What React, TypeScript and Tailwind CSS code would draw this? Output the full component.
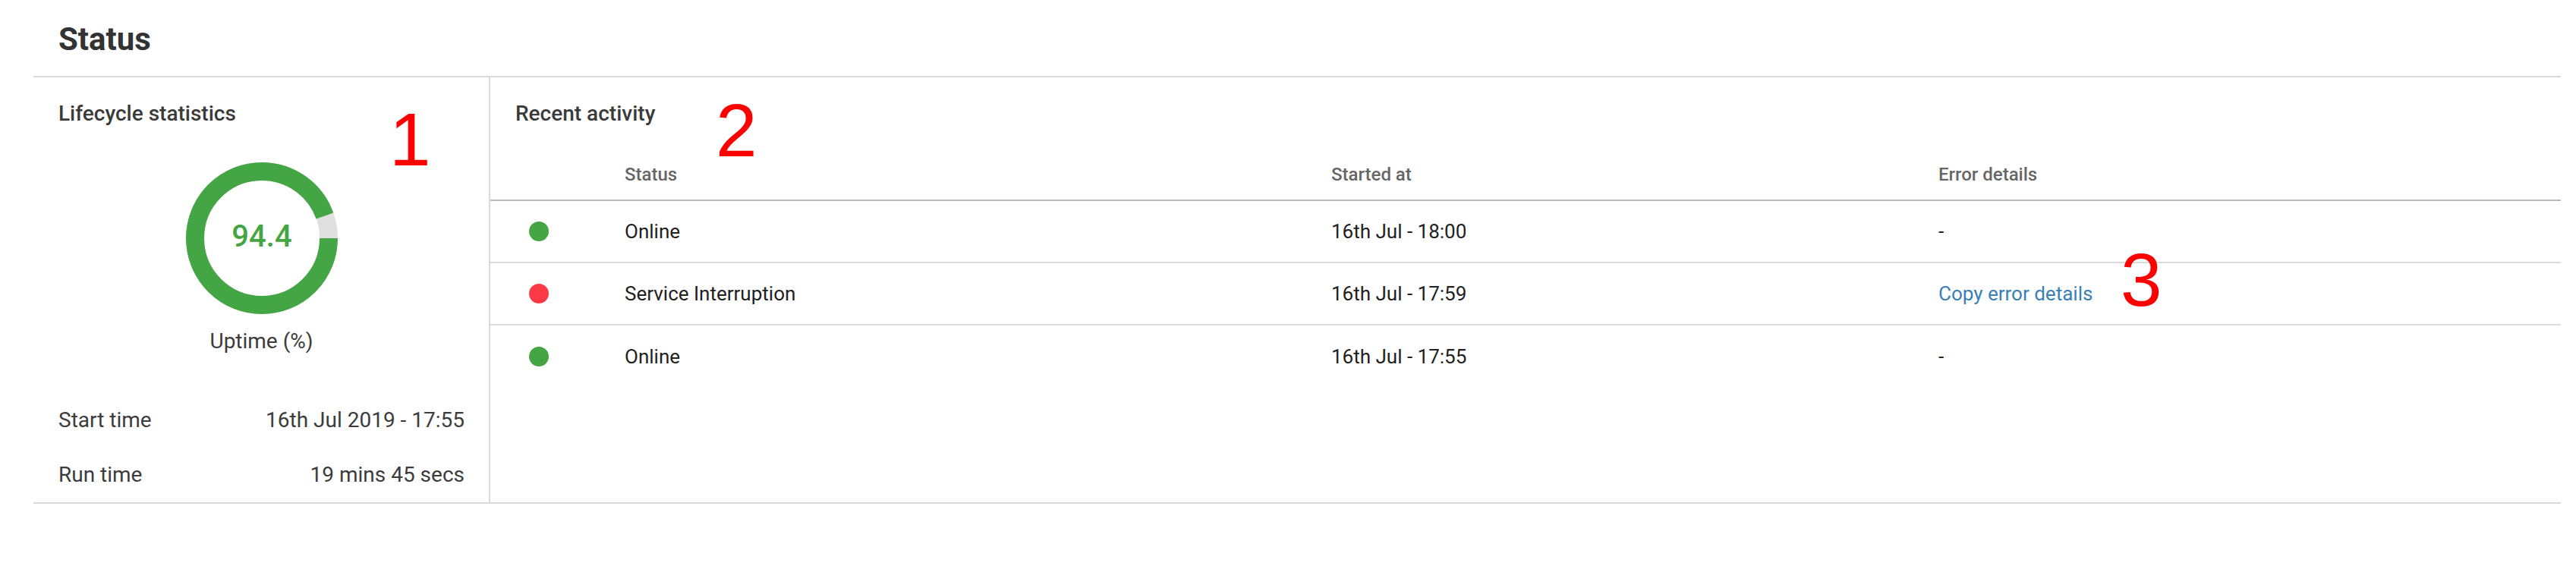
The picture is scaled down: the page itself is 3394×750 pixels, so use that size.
import React from 'react';

type Activity = {
  status: string;
  ok: boolean;
  startedAt: string;
  error: string | null;
};

const activity: Activity[] = [
  { status: 'Online', ok: true, startedAt: '16th Jul - 18:00', error: null },
  { status: 'Service Interruption', ok: false, startedAt: '16th Jul - 17:59', error: 'Copy error details' },
  { status: 'Online', ok: true, startedAt: '16th Jul - 17:55', error: null },
];

const UptimeDonut: React.FC<{ value: number }> = ({ value }) => {
  const r = 88;
  const c = 2 * Math.PI * r;
  return (
    <svg width="200" height="200" viewBox="0 0 200 200">
      <circle cx="100" cy="100" r={r} fill="none" stroke="#e0e0e0" strokeWidth="24" />
      <circle
        cx="100"
        cy="100"
        r={r}
        fill="none"
        stroke="#43a543"
        strokeWidth="24"
        strokeDasharray={`${(c * value) / 100} ${c}`}
      />
      <text
        x="100"
        y="111"
        textAnchor="middle"
        fontFamily="Roboto, sans-serif"
        fontSize="40"
        fontWeight="500"
        fill="#43a543"
      >
        {value}
      </text>
    </svg>
  );
};

const App: React.FC = () => {
  return (
    <div className="relative min-h-[750px] bg-white font-[family-name:Roboto,sans-serif]">
      <h1 className="pl-[77px] pt-[28px] pb-[24px] text-[42px] leading-[48px] font-bold text-[#333333]">Status</h1>

      <div className="ml-[44px] mr-[20px] flex border-y-2 border-[#dadada]">
        {/* lifecycle */}
        <div className="w-[600px] shrink-0 pl-[33px] pr-[32px] pt-[30px] pb-[18px]">
          <h2 className="text-[28px] leading-[36px] font-medium text-[#3a3a3a]">Lifecycle statistics</h2>
          <div className="mt-[46px] flex flex-col items-center">
            <UptimeDonut value={94.4} />
            <p className="mt-[18px] text-[28px] leading-[36px] text-[#3c3c3c]">Uptime (%)</p>
          </div>
          <div className="mt-[68px] flex flex-col gap-[36px] text-[28px] leading-[36px] text-[#3c3c3c]">
            <div className="flex justify-between">
              <span>Start time</span>
              <span>16th Jul 2019 - 17:55</span>
            </div>
            <div className="flex justify-between">
              <span>Run time</span>
              <span>19 mins 45 secs</span>
            </div>
          </div>
        </div>

        {/* recent activity */}
        <div className="flex-1 border-l-2 border-[#dadada]">
          <h2 className="pl-[33px] pt-[30px] text-[28px] leading-[36px] font-medium text-[#3a3a3a]">Recent activity</h2>
          <div className="mt-[46px] grid grid-cols-[177px_931px_800px_1fr] border-b-2 border-[#b8b8b8] pb-[17px] text-[24px] leading-[32px] font-medium text-[#666666]">
            <span />
            <span>Status</span>
            <span>Started at</span>
            <span>Error details</span>
          </div>
          {activity.map((row, i) => (
            <div
              key={i}
              className={`grid h-[82px] grid-cols-[177px_931px_800px_1fr] items-center text-[26px] leading-[34px] text-[#212121] ${
                i < activity.length - 1 ? 'border-b-2 border-[#dadada]' : ''
              }`}
            >
              <span className="pl-[51px]">
                <span className={`block h-[26px] w-[26px] rounded-full ${row.ok ? 'bg-[#43a543]' : 'bg-[#fc3a46]'}`} />
              </span>
              <span>{row.status}</span>
              <span>{row.startedAt}</span>
              {row.error ? <span className="text-[#3a7fb5]">{row.error}</span> : <span>-</span>}
            </div>
          ))}
        </div>
      </div>

      {/* annotation numbers */}
      <span className="absolute left-[513px] top-[135px] text-[98px] leading-[98px] text-[#ff0000] font-[family-name:Liberation_Sans,Arial,sans-serif]">1</span>
      <span className="absolute left-[943px] top-[123px] text-[98px] leading-[98px] text-[#ff0000] font-[family-name:Liberation_Sans,Arial,sans-serif]">2</span>
      <span className="absolute left-[2794px] top-[320px] text-[98px] leading-[98px] text-[#ff0000] font-[family-name:Liberation_Sans,Arial,sans-serif]">3</span>
    </div>
  );
};

export default App;
